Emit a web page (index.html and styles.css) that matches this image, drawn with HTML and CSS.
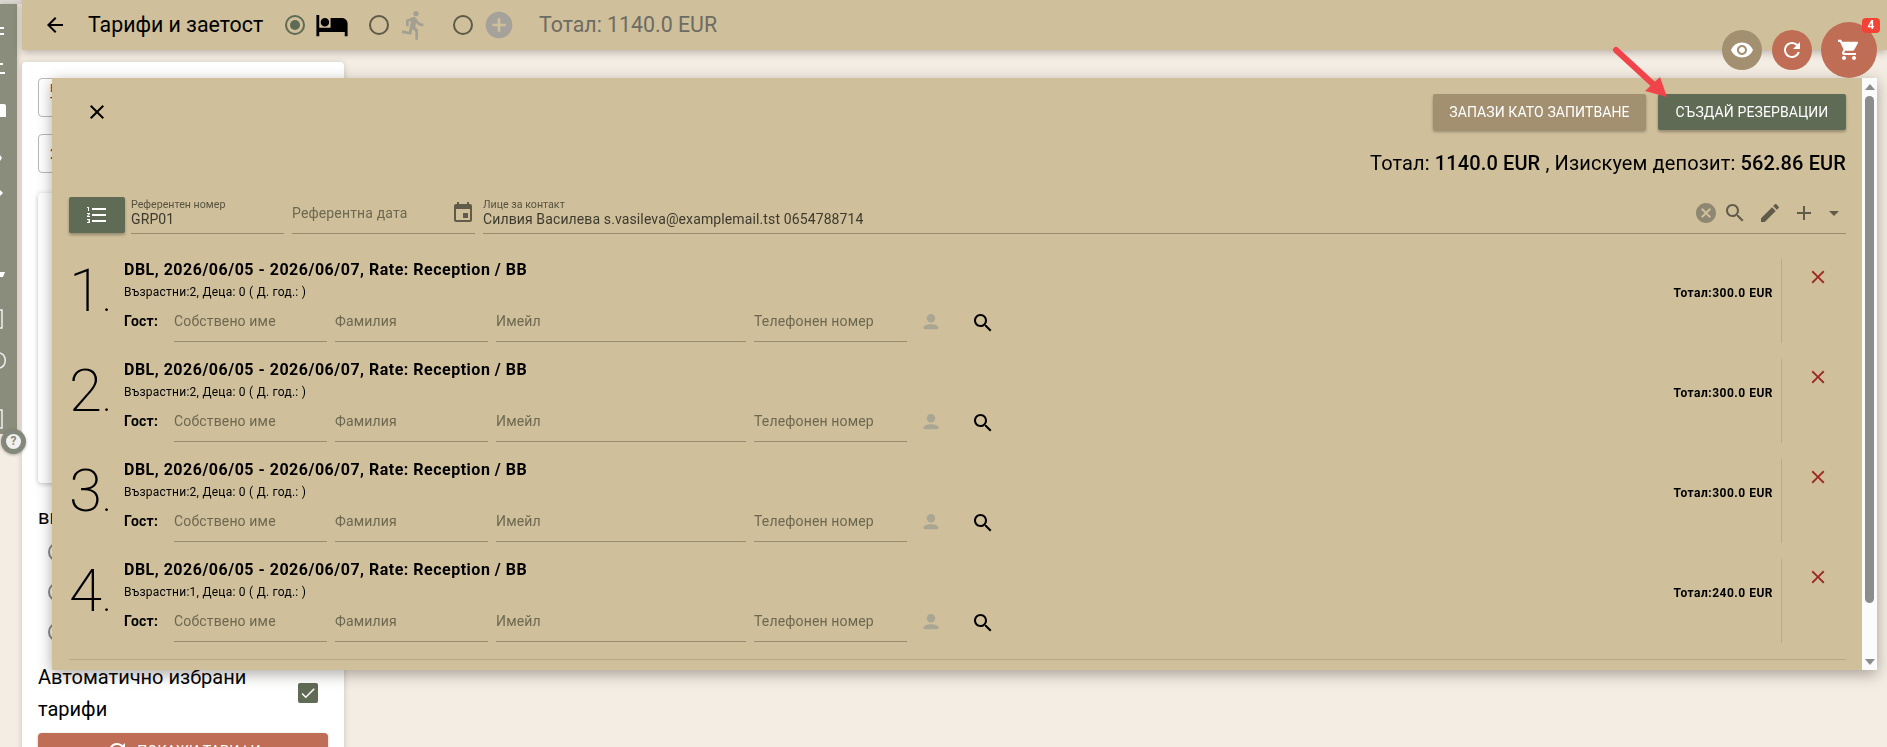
FILE: index.html
```html
<!DOCTYPE html>
<html lang="bg">
<head>
<meta charset="utf-8">
<title>Тарифи и заетост</title>
<link rel="stylesheet" href="styles.css">
</head>
<body>
<svg class="defs" width="0" height="0">
  <symbol id="i-back" viewBox="0 0 24 24"><path d="M20 11H7.83l5.59-5.59L12 4l-8 8 8 8 1.41-1.41L7.83 13H20v-2z"/></symbol>
  <symbol id="i-bed" viewBox="0 0 24 24"><path d="M7 13c1.66 0 3-1.34 3-3S8.66 7 7 7s-3 1.34-3 3 1.34 3 3 3zm12-6h-8v7H3V5H1v15h2v-3h18v3h2v-9c0-2.21-1.79-4-4-4z"/></symbol>
  <symbol id="i-run" viewBox="0 0 24 24"><path d="M13.49 5.48c1.1 0 2-.9 2-2s-.9-2-2-2-2 .9-2 2 .9 2 2 2zm-3.6 13.9l1-4.4 2.1 2v6h2v-7.5l-2.1-2 .6-3c1.3 1.5 3.3 2.5 5.5 2.5v-2c-1.9 0-3.5-1-4.3-2.4l-1-1.6c-.4-.6-1-1-1.7-1-.3 0-.5.1-.8.1l-5.2 2.2v4.7h2v-3.4l1.8-.7-1.6 8.1-4.9-1-.4 2 7 1.4z"/></symbol>
  <symbol id="i-addc" viewBox="0 0 24 24"><path d="M12 2C6.48 2 2 6.48 2 12s4.48 10 10 10 10-4.48 10-10S17.52 2 12 2zm5 11h-4v4h-2v-4H7v-2h4V7h2v4h4v2z"/></symbol>
  <symbol id="i-close" viewBox="0 0 24 24"><path d="M19 6.41L17.59 5 12 10.59 6.41 5 5 6.41 10.59 12 5 17.59 6.41 19 12 13.41 17.59 19 19 17.59 13.41 12z"/></symbol>
  <symbol id="i-list" viewBox="0 0 24 24"><path d="M2 17h2v.5H3v1h1v.5H2v1h3v-4H2v1zm1-9h1V4H2v1h1v3zm-1 3h1.8L2 13.1v.9h3v-1H3.2L5 10.9V10H2v1zm5-6v2h14V5H7zm0 14h14v-2H7v2zm0-6h14v-2H7v2z"/></symbol>
  <symbol id="i-event" viewBox="0 0 24 24"><path d="M17 12h-5v5h5v-5zM16 1v2H8V1H6v2H5c-1.11 0-1.99.9-1.99 2L3 19c0 1.1.89 2 2 2h14c1.1 0 2-.9 2-2V5c0-1.1-.9-2-2-2h-1V1h-2zm3 18H5V8h14v11z"/></symbol>
  <symbol id="i-cancel" viewBox="0 0 24 24"><path d="M12 2C6.47 2 2 6.47 2 12s4.47 10 10 10 10-4.47 10-10S17.53 2 12 2zm5 13.59L15.59 17 12 13.41 8.41 17 7 15.59 10.59 12 7 8.41 8.41 7 12 10.59 15.59 7 17 8.41 13.41 12 17 15.59z"/></symbol>
  <symbol id="i-search" viewBox="0 0 24 24"><path d="M15.5 14h-.79l-.28-.27C15.41 12.59 16 11.11 16 9.5 16 5.91 13.09 3 9.5 3S3 5.91 3 9.5 5.91 16 9.5 16c1.61 0 3.09-.59 4.23-1.57l.27.28v.79l5 4.99L20.49 19l-4.99-5zm-6 0C7.01 14 5 11.99 5 9.5S7.01 5 9.5 5 14 7.01 14 9.5 11.99 14 9.5 14z"/></symbol>
  <symbol id="i-edit" viewBox="0 0 24 24"><path d="M3 17.25V21h3.75L17.81 9.94l-3.75-3.75L3 17.25zM20.71 7.04c.39-.39.39-1.02 0-1.41l-2.34-2.34c-.39-.39-1.02-.39-1.41 0l-1.83 1.83 3.75 3.75 1.83-1.83z"/></symbol>
  <symbol id="i-add" viewBox="0 0 24 24"><path d="M19 13h-6v6h-2v-6H5v-2h6V5h2v6h6v2z"/></symbol>
  <symbol id="i-drop" viewBox="0 0 24 24"><path d="M7 10l5 5 5-5z"/></symbol>
  <symbol id="i-person" viewBox="0 0 24 24"><circle cx="12" cy="8" r="4.6"/><path d="M12 14.5c-4.2 0-8.3 1.6-8.3 3.6 0 1.3 1 1.9 2.4 1.9h11.8c1.4 0 2.4-.6 2.4-1.9 0-2-4.1-3.6-8.3-3.6z"/></symbol>
  <symbol id="i-eye" viewBox="0 0 24 24"><path d="M12 4.5C7 4.5 2.73 7.61 1 12c1.73 4.39 6 7.5 11 7.5s9.27-3.11 11-7.5c-1.73-4.39-6-7.5-11-7.5zM12 17c-2.76 0-5-2.24-5-5s2.24-5 5-5 5 2.24 5 5-2.24 5-5 5zm0-8c-1.66 0-3 1.34-3 3s1.34 3 3 3 3-1.34 3-3-1.34-3-3-3z"/></symbol>
  <symbol id="i-refresh" viewBox="0 0 24 24"><path d="M17.65 6.35C16.2 4.9 14.21 4 12 4c-4.42 0-7.99 3.58-7.99 8s3.57 8 7.99 8c3.73 0 6.84-2.55 7.73-6h-2.08c-.82 2.33-3.04 4-5.65 4-3.31 0-6-2.69-6-6s2.69-6 6-6c1.66 0 3.14.69 4.22 1.78L13 11h7V4l-2.35 2.35z"/></symbol>
  <symbol id="i-cart" viewBox="0 0 24 24"><path d="M7 18c-1.1 0-1.99.9-1.99 2S5.9 22 7 22s2-.9 2-2-.9-2-2-2zM1 2v2h2l3.6 7.59-1.35 2.45c-.16.28-.25.61-.25.96 0 1.1.9 2 2 2h12v-2H7.42c-.14 0-.25-.11-.25-.25l.03-.12.9-1.83h7.45c.75 0 1.41-.41 1.75-1.03l3.58-6.49c.08-.14.12-.31.12-.48 0-.55-.45-1-1-1H5.21l-.94-2H1zm16 16c-1.1 0-1.99.9-1.99 2s.89 2 1.99 2 2-.9 2-2-.9-2-2-2z"/></symbol>
  <symbol id="i-check" viewBox="0 0 24 24"><path d="M9 16.17L4.83 12l-1.42 1.41L9 19 21 7l-1.41-1.41z"/></symbol>
</svg>

<div class="app">
  <div class="gutter">
    <nav class="rail">
      <svg class="rail-art" width="17" height="430" viewBox="0 0 17 430">
        <g fill="#fff">
          <rect x="0" y="23" width="4" height="2"/><rect x="0" y="29" width="4" height="2"/>
          <rect x="0" y="59" width="3" height="2"/><rect x="0" y="68" width="5" height="2"/>
          <path d="M0 100h4q2 0 2 2v11H0z"/>
          <path d="M0 151l2 3-2 3z"/>
          <path d="M0 186l3 3-3 3z"/>
          <path d="M0 268h5l-2 5H0z"/>
        </g>
        <g fill="none" stroke="#f2eef0" stroke-width="1.5">
          <path d="M0 306h2v18H0"/>
          <path d="M0 349a8 8 0 0 1 0 15"/>
          <path d="M0 406h2v18H0"/>
        </g>
      </svg>
    </nav>
    <div class="help"><span class="help-dot">?</span></div>
  </div>

  <div class="page">
    <header class="topbar">
      <svg class="ico ico-back"><use href="#i-back"/></svg>
      <h1 class="topbar-title">Тарифи и заетост</h1>
      <span class="radio radio-on radio-first"></span>
      <svg class="ico ico-bed"><use href="#i-bed"/></svg>
      <span class="radio radio-second"></span>
      <svg class="ico ico-run"><use href="#i-run"/></svg>
      <span class="radio radio-third"></span>
      <svg class="ico ico-addc"><use href="#i-addc"/></svg>
      <span class="topbar-total">Тотал: 1140.0 EUR</span>
    </header>

    <aside class="side">
      <div class="side-field"><span class="side-label">В</span><span class="side-value">Т</span></div>
      <div class="side-field side-field-mid"><span class="side-value">2</span></div>
      <div class="side-panel"></div>
      <div class="side-heading">ви</div>
      <div class="side-radios">
        <span class="radio radio-plain"></span>
        <span class="radio radio-plain"></span>
        <span class="radio radio-plain"></span>
      </div>
      <div class="side-auto">
        <span class="side-auto-text">Автоматично избрани тарифи</span>
        <span class="checkbox"><svg class="ico ico-check"><use href="#i-check"/></svg></span>
      </div>
      <button class="side-btn"><svg class="ico ico-sidebtn"><use href="#i-refresh"/></svg>ПОКАЖИ ТАРИФИ</button>
    </aside>
  </div>
</div>

<section class="modal">
  <div class="modal-body">
    <div class="modal-actions">
      <button class="modal-close"><svg class="ico ico-close"><use href="#i-close"/></svg></button>
      <button class="btn btn-tan">Запази като запитване</button>
      <button class="btn btn-green">Създай резервации</button>
    </div>
    <div class="modal-total">Тотал: <b>1140.0 EUR</b> , Изискуем депозит: <b>562.86 EUR</b></div>

    <div class="meta">
      <button class="meta-list"><svg class="ico ico-list"><use href="#i-list"/></svg></button>
      <div class="meta-field meta-ref">
        <span class="meta-label">Референтен номер</span>
        <span class="meta-value">GRP01</span>
      </div>
      <div class="meta-field meta-date">
        <span class="meta-placeholder">Референтна дата</span>
      </div>
      <svg class="ico ico-event"><use href="#i-event"/></svg>
      <div class="meta-field meta-contact">
        <div class="meta-contact-text">
          <span class="meta-label">Лице за контакт</span>
          <span class="meta-value">Силвия Василева s.vasileva@examplemail.tst 0654788714</span>
        </div>
        <svg class="ico ico-cancel"><use href="#i-cancel"/></svg>
        <svg class="ico ico-msearch"><use href="#i-search"/></svg>
        <svg class="ico ico-edit"><use href="#i-edit"/></svg>
        <svg class="ico ico-add"><use href="#i-add"/></svg>
        <svg class="ico ico-drop"><use href="#i-drop"/></svg>
      </div>
    </div>

    <div class="rooms">
      <article class="room">
        <div class="room-no">1<span class="room-dot">.</span></div>
        <div class="room-info">
          <div class="room-title">DBL, 2026/06/05 - 2026/06/07, Rate: Reception / BB</div>
          <div class="room-sub">Възрастни:2, Деца: 0 ( Д. год.: )</div>
          <div class="guest">
            <span class="guest-label">Гост:</span>
            <span class="guest-field">Собствено име</span>
            <span class="guest-field">Фамилия</span>
            <span class="guest-field guest-email">Имейл</span>
            <span class="guest-field">Телефонен номер</span>
            <svg class="ico ico-person"><use href="#i-person"/></svg>
            <svg class="ico ico-gsearch"><use href="#i-search"/></svg>
          </div>
        </div>
        <div class="room-total">Тотал:300.0 EUR</div>
        <div class="room-remove"><svg class="ico ico-remove"><use href="#i-close"/></svg></div>
      </article>
      <article class="room">
        <div class="room-no">2<span class="room-dot">.</span></div>
        <div class="room-info">
          <div class="room-title">DBL, 2026/06/05 - 2026/06/07, Rate: Reception / BB</div>
          <div class="room-sub">Възрастни:2, Деца: 0 ( Д. год.: )</div>
          <div class="guest">
            <span class="guest-label">Гост:</span>
            <span class="guest-field">Собствено име</span>
            <span class="guest-field">Фамилия</span>
            <span class="guest-field guest-email">Имейл</span>
            <span class="guest-field">Телефонен номер</span>
            <svg class="ico ico-person"><use href="#i-person"/></svg>
            <svg class="ico ico-gsearch"><use href="#i-search"/></svg>
          </div>
        </div>
        <div class="room-total">Тотал:300.0 EUR</div>
        <div class="room-remove"><svg class="ico ico-remove"><use href="#i-close"/></svg></div>
      </article>
      <article class="room">
        <div class="room-no">3<span class="room-dot">.</span></div>
        <div class="room-info">
          <div class="room-title">DBL, 2026/06/05 - 2026/06/07, Rate: Reception / BB</div>
          <div class="room-sub">Възрастни:2, Деца: 0 ( Д. год.: )</div>
          <div class="guest">
            <span class="guest-label">Гост:</span>
            <span class="guest-field">Собствено име</span>
            <span class="guest-field">Фамилия</span>
            <span class="guest-field guest-email">Имейл</span>
            <span class="guest-field">Телефонен номер</span>
            <svg class="ico ico-person"><use href="#i-person"/></svg>
            <svg class="ico ico-gsearch"><use href="#i-search"/></svg>
          </div>
        </div>
        <div class="room-total">Тотал:300.0 EUR</div>
        <div class="room-remove"><svg class="ico ico-remove"><use href="#i-close"/></svg></div>
      </article>
      <article class="room">
        <div class="room-no">4<span class="room-dot">.</span></div>
        <div class="room-info">
          <div class="room-title">DBL, 2026/06/05 - 2026/06/07, Rate: Reception / BB</div>
          <div class="room-sub">Възрастни:1, Деца: 0 ( Д. год.: )</div>
          <div class="guest">
            <span class="guest-label">Гост:</span>
            <span class="guest-field">Собствено име</span>
            <span class="guest-field">Фамилия</span>
            <span class="guest-field guest-email">Имейл</span>
            <span class="guest-field">Телефонен номер</span>
            <svg class="ico ico-person"><use href="#i-person"/></svg>
            <svg class="ico ico-gsearch"><use href="#i-search"/></svg>
          </div>
        </div>
        <div class="room-total">Тотал:240.0 EUR</div>
        <div class="room-remove"><svg class="ico ico-remove"><use href="#i-close"/></svg></div>
      </article>
    </div>
    <div class="modal-rule"></div>
  </div>
  <div class="scrollbar">
    <span class="scroll-up"></span>
    <span class="scroll-thumb"></span>
    <span class="scroll-down"></span>
  </div>
</section>

<div class="fabs">
  <button class="fab fab-eye"><svg class="ico ico-eye"><use href="#i-eye"/></svg></button>
  <button class="fab fab-refresh"><svg class="ico ico-refresh"><use href="#i-refresh"/></svg></button>
  <button class="fab fab-cart"><svg class="ico ico-cart"><use href="#i-cart"/></svg><span class="badge">4</span></button>
</div>

<svg class="pointer" width="70" height="64" viewBox="0 0 70 64">
  <path d="M4 4L42 39" stroke="#f0434a" stroke-width="6" stroke-linecap="round" fill="none"/>
  <path d="M33 45L48 31 55 51z" fill="#f0434a"/>
</svg>
</body>
</html>
```

FILE: styles.css
```css
* { box-sizing: border-box; }
html, body { margin: 0; height: 100%; }
body {
  font-family: Roboto, "Liberation Sans", sans-serif;
  background: #f4ede3;
  color: #000;
  overflow: hidden;
}
button { font-family: inherit; border: 0; padding: 0; cursor: pointer; }
.defs { position: absolute; }
.ico { display: block; flex: none; fill: currentColor; }

.app { display: flex; height: 747px; overflow: hidden; }
.gutter { width: 22px; flex: none; position: relative; border-top: 4px solid #d9d7d2; }
.rail { width: 17px; height: 430px; background: #8a8d7b; box-shadow: 2px 0 4px rgba(120, 90, 80, .25); }
.rail-art { display: block; }
.help {
  position: absolute; left: 1px; top: 425px;
  width: 25px; height: 25px; border-radius: 50%;
  background: #83887a; display: flex; align-items: center; justify-content: center;
  box-shadow: 0 1px 3px rgba(0, 0, 0, .3);
}
.help-dot {
  width: 15px; height: 15px; border-radius: 50%;
  background: #f1f1ef; color: #8a8d7b; font-size: 12px; font-weight: 700;
  text-align: center; line-height: 15px;
}

.page { flex: 1; min-width: 0; }
.topbar {
  height: 50px; background: #cfbf9b; display: flex; align-items: center;
  box-shadow: 0 2px 8px rgba(60, 50, 40, .35);
  position: relative;
}
.ico-back { width: 24px; height: 24px; margin-left: 21px; color: #000; }
.topbar-title { font-size: 21.33px; font-weight: 400; margin: 0 0 2px 21px; width: 174px; white-space: nowrap; }
.radio {
  display: block; flex: none; width: 20px; height: 20px; border-radius: 50%;
  border: 2px solid #5e5a49; position: relative;
}
.radio-on { border-color: #5f6b54; }
.radio-on::after {
  content: ""; position: absolute; inset: 3px; border-radius: 50%; background: #5f6b54;
}
.radio-first { margin-left: 23px; }
.ico-bed { width: 34px; height: 34px; margin-left: 10px; color: #000; }
.radio-second { margin-left: 20px; }
.ico-run { width: 32px; height: 32px; margin-left: 9px; color: #a39f92; }
.radio-third { margin-left: 23px; }
.ico-addc { width: 32px; height: 32px; margin-left: 10px; color: #a5a29b; }
.topbar-total { font-size: 21.33px; margin: 0 0 2px 24px; color: #6d6c62; white-space: nowrap; }

.side {
  width: 322px; margin-top: 12px; height: 700px; background: #fff;
  border-radius: 4px 4px 0 0; padding: 16px 16px 0;
  box-shadow: 0 1px 6px rgba(0, 0, 0, .18);
}
.side-field {
  height: 39px; width: 290px; border: 1px solid #b9b9b9; border-radius: 4px;
  padding: 3px 11px; font-size: 11px; color: #444; display: flex; flex-direction: column;
}
.side-field-mid { margin-top: 17px; justify-content: center; font-size: 14px; }
.side-label { font-size: 11px; line-height: 13px; }
.side-value { font-size: 14px; line-height: 16px; }
.side-panel {
  margin-top: 20px; height: 290px; width: 290px; border-radius: 4px; background: #fff;
  box-shadow: 0 1px 5px rgba(0, 0, 0, .25);
}
.side-heading { font-size: 20px; line-height: 24px; margin-top: 22px; }
.side-radios { display: flex; flex-direction: column; gap: 20px; padding-left: 10px; margin-top: 13px; }
.radio-plain { border-color: #8a8a8a; }
.side-auto { display: flex; align-items: center; justify-content: space-between; margin-top: 19px; width: 280px; }
.side-auto-text { font-size: 20px; line-height: 32px; width: 240px; }
.checkbox {
  width: 20px; height: 20px; border-radius: 2px; background: #5f6b54; color: #fff;
  display: flex; align-items: center; justify-content: center;
}
.ico-check { width: 18px; height: 18px; }
.side-btn {
  display: flex; align-items: center; justify-content: center; gap: 8px;
  width: 290px; height: 36px; margin-top: 8px; background: #bf6e55; color: #fff;
  border-radius: 4px; font-size: 14px; letter-spacing: .25px; box-shadow: 0 1px 3px rgba(0, 0, 0, .25);
}
.ico-sidebtn { width: 24px; height: 24px; }

.modal {
  position: fixed; left: 52px; top: 78px; width: 1825px; height: 592px;
  background: #cfbf9b; display: flex;
  box-shadow: 0 4px 14px rgba(50, 40, 30, .4);
}
.modal-body { flex: 1; min-width: 0; padding: 16px 16px 0 17px; }
.modal-actions { display: flex; align-items: center; justify-content: flex-end; gap: 12px; height: 36px; }
.modal-close { background: none; margin-right: auto; margin-left: 16px; width: 24px; height: 24px; color: #000; }
.ico-close { width: 24px; height: 24px; }
.btn {
  height: 36px; border-radius: 2px; color: #fff; font-size: 14px; text-transform: uppercase;
  letter-spacing: .1px;
  box-shadow: 0 2px 3px rgba(0, 0, 0, .28);
}
.btn-tan { width: 213px; background: #a39070; }
.btn-green { width: 188px; background: #5f6b54; }
.modal-total { text-align: right; font-size: 20px; line-height: 24px; margin-top: 21px; letter-spacing: .12px; }
.modal-total b { font-weight: 500; }

.meta { display: flex; align-items: flex-end; margin-top: 21px; height: 38px; }
.meta-list {
  width: 56px; height: 36px; margin-bottom: 1px; border-radius: 2px; background: #5f6b54; color: #fff;
  display: flex; align-items: center; justify-content: center;
  box-shadow: 0 2px 3px rgba(0, 0, 0, .28);
}
.ico-list { width: 24px; height: 24px; }
.meta-field {
  height: 38px; border-bottom: 1px solid #9a8c6e; display: flex; flex-direction: column; justify-content: flex-end;
  padding-bottom: 5px;
}
.meta-ref { width: 153px; margin-left: 6px; }
.meta-date { width: 183px; margin-left: 8px; justify-content: center; padding-bottom: 4px; }
.meta-label { font-size: 10.67px; line-height: 12px; color: #57523f; }
.meta-value { font-size: 14px; line-height: 17px; color: #3d3a2e; white-space: nowrap; letter-spacing: .12px; }
.meta-placeholder { font-size: 14px; color: #6d6850; letter-spacing: .15px; }
.ico-event { width: 24px; height: 24px; margin: 0 0 9px -24px; color: #615c49; }
.meta-contact {
  flex: 1; min-width: 0; margin-left: 8px; flex-direction: row; align-items: flex-end; padding-bottom: 5px; color: #615c49;
}
.meta-contact-text { flex: 1; display: flex; flex-direction: column; }
.ico-cancel { width: 24px; height: 24px; color: #8e8872; margin-bottom: 3px; }
.ico-msearch { width: 24px; height: 24px; margin: 0 0 3px 5px; }
.ico-edit { width: 24px; height: 24px; margin: 0 0 3px 11px; }
.ico-add { width: 24px; height: 24px; margin: 0 0 3px 10px; }
.ico-drop { width: 24px; height: 24px; margin: 0 0 3px 6px; }

.rooms { display: flex; flex-direction: column; gap: 16px; margin-top: 25px; }
.room { display: flex; height: 84px; }
.room-no {
  width: 55px; flex: none; font-size: 60px; font-weight: 200; line-height: 60px;
  white-space: nowrap; margin-top: 2px;
}
.room-dot { font-weight: 700; font-size: 18px; margin-left: 2px; line-height: 1; }
.room-info { flex: 1; min-width: 0; }
.room-title { font-size: 16px; font-weight: 700; line-height: 20px; margin-top: 1px; white-space: nowrap; letter-spacing: .5px; }
.room-sub { font-size: 12px; line-height: 14px; margin-top: 5px; letter-spacing: .25px; }
.guest { display: flex; margin-top: 5px; height: 43px; align-items: flex-start; }
.guest-label { font-size: 14px; font-weight: 700; width: 50px; line-height: 35px; letter-spacing: .25px; }
.guest-field {
  width: 153px; margin-right: 8px; height: 38px; border-bottom: 1px solid #9a8c6e;
  font-size: 14px; line-height: 35px; color: #6d6850; letter-spacing: .15px;
}
.guest-email { width: 250px; }
.ico-person { width: 22px; height: 22px; margin: 7px 0 0 5px; color: #aaa694; }
.ico-gsearch { width: 24px; height: 24px; margin: 7px 0 0 29px; color: #000; }
.room-total {
  width: 190px; flex: none; text-align: right; font-size: 12px; font-weight: 700; line-height: 14px;
  padding: 27px 8px 0 0; white-space: nowrap; letter-spacing: .5px;
}
.room-remove { width: 65px; flex: none; border-left: 1px solid #b9aa88; padding: 7px 0 0 25px; }
.ico-remove { width: 22px; height: 22px; color: #9c2a22; }
.modal-rule { height: 1px; background: #b9aa88; margin-top: 16px; }

.scrollbar {
  width: 15px; flex: none; background: #fbfbfb; display: flex; flex-direction: column; align-items: center;
}
.scroll-up {
  margin-top: 6px; width: 0; height: 0;
  border-left: 5px solid transparent; border-right: 5px solid transparent; border-bottom: 6px solid #8c8c8c;
}
.scroll-thumb { width: 9px; height: 507px; margin-top: 6px; border-radius: 5px; background: #8c8c8c; }
.scroll-down {
  margin-top: 56px; width: 0; height: 0;
  border-left: 5px solid transparent; border-right: 5px solid transparent; border-top: 6px solid #8c8c8c;
}

.fabs { position: fixed; left: 1722px; top: 22px; display: flex; align-items: center; gap: 10px; }
.fab {
  width: 40px; height: 40px; border-radius: 50%; color: #fff; display: flex; align-items: center; justify-content: center;
}
.fab-eye { background: #a39070; }
.fab-refresh { background: #bf6e55; }
.fab-cart { width: 56px; height: 56px; background: #bf6e55; position: relative; margin-left: -1px; }
.ico-eye { width: 24px; height: 24px; }
.ico-refresh { width: 24px; height: 24px; }
.ico-cart { width: 24px; height: 24px; }
.badge {
  position: absolute; left: 41px; top: -4px; min-width: 18px; height: 15px; border-radius: 4px;
  background: #f44336; color: #fff; font-size: 12px; font-weight: 700; line-height: 15px; text-align: center;
}
.pointer { position: fixed; left: 1612px; top: 46px; }
```
